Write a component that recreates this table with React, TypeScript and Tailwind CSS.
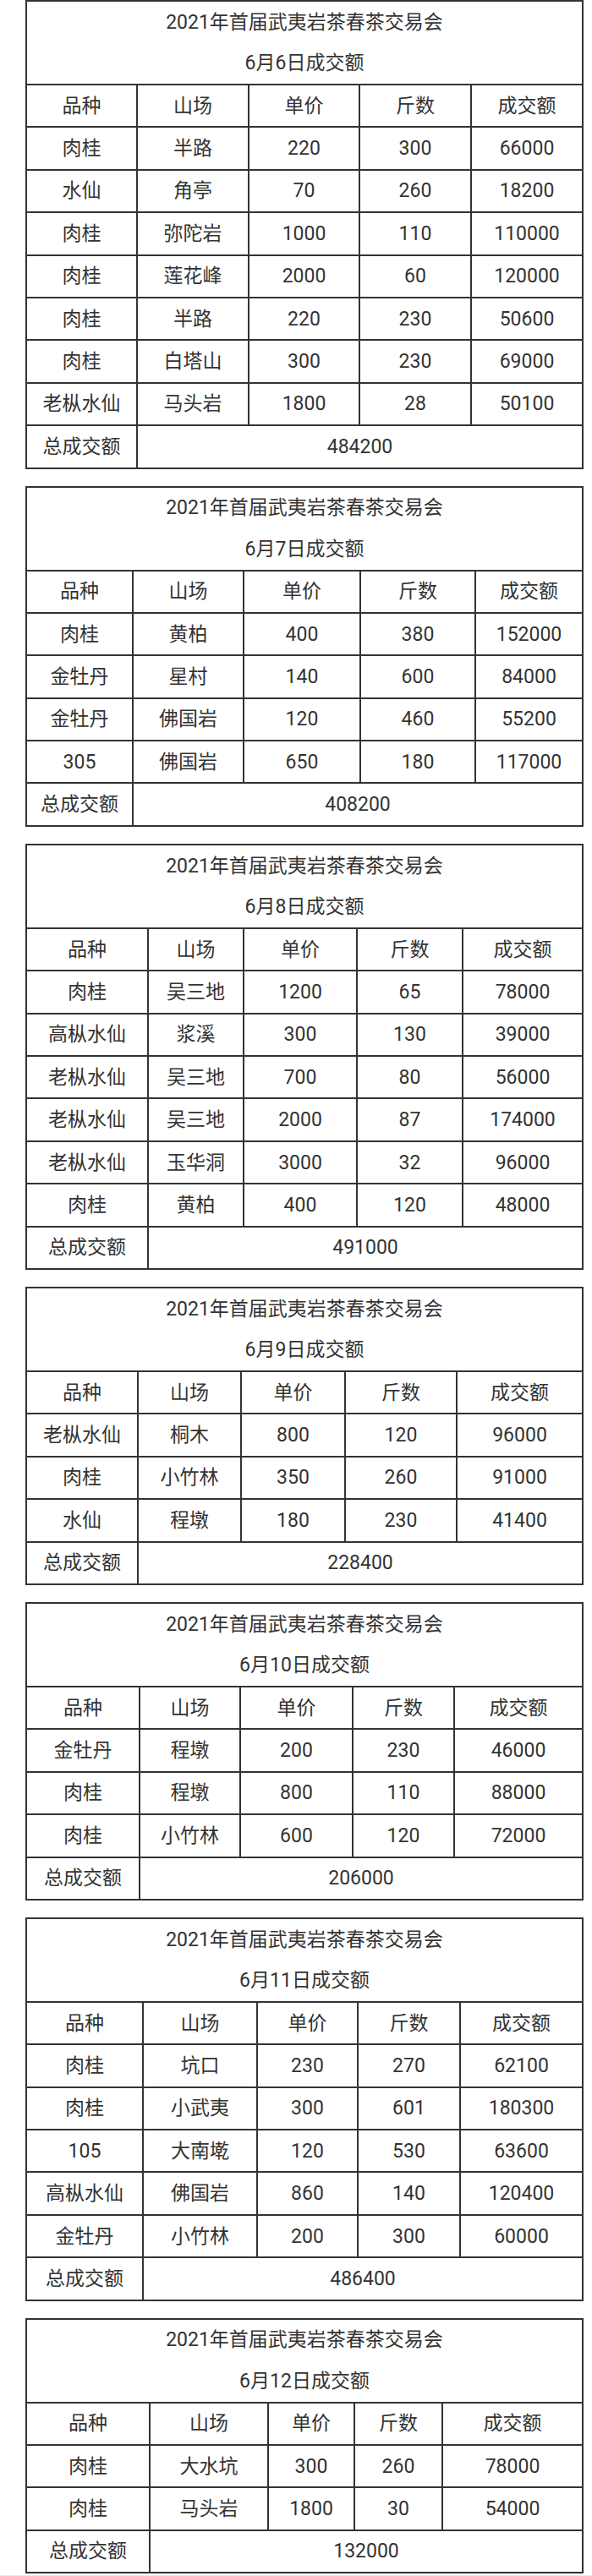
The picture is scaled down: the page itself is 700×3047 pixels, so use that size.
import React from "react";

type Row = [string, string, string, string, string];
type TableData = {
  date: string;
  cols: [string, string, string, string];
  rows: Row[];
  total: string;
};

const tables: TableData[] = [
  {
    date: "6月6日成交额",
    cols: ["w-[129px]", "w-[132px]", "w-[131px]", "w-[132px]"],
    rows: [
      ["肉桂", "半路", "220", "300", "66000"],
      ["水仙", "角亭", "70", "260", "18200"],
      ["肉桂", "弥陀岩", "1000", "110", "110000"],
      ["肉桂", "莲花峰", "2000", "60", "120000"],
      ["肉桂", "半路", "220", "230", "50600"],
      ["肉桂", "白塔山", "300", "230", "69000"],
      ["老枞水仙", "马头岩", "1800", "28", "50100"],
    ],
    total: "484200",
  },
  {
    date: "6月7日成交额",
    cols: ["w-[124px]", "w-[131px]", "w-[138px]", "w-[136px]"],
    rows: [
      ["肉桂", "黄柏", "400", "380", "152000"],
      ["金牡丹", "星村", "140", "600", "84000"],
      ["金牡丹", "佛国岩", "120", "460", "55200"],
      ["305", "佛国岩", "650", "180", "117000"],
    ],
    total: "408200",
  },
  {
    date: "6月8日成交额",
    cols: ["w-[142px]", "w-[113px]", "w-[134px]", "w-[125px]"],
    rows: [
      ["肉桂", "吴三地", "1200", "65", "78000"],
      ["高枞水仙", "浆溪", "300", "130", "39000"],
      ["老枞水仙", "吴三地", "700", "80", "56000"],
      ["老枞水仙", "吴三地", "2000", "87", "174000"],
      ["老枞水仙", "玉华洞", "3000", "32", "96000"],
      ["肉桂", "黄柏", "400", "120", "48000"],
    ],
    total: "491000",
  },
  {
    date: "6月9日成交额",
    cols: ["w-[130px]", "w-[122px]", "w-[123px]", "w-[132px]"],
    rows: [
      ["老枞水仙", "桐木", "800", "120", "96000"],
      ["肉桂", "小竹林", "350", "260", "91000"],
      ["水仙", "程墩", "180", "230", "41400"],
    ],
    total: "228400",
  },
  {
    date: "6月10日成交额",
    cols: ["w-[132px]", "w-[119px]", "w-[133px]", "w-[120px]"],
    rows: [
      ["金牡丹", "程墩", "200", "230", "46000"],
      ["肉桂", "程墩", "800", "110", "88000"],
      ["肉桂", "小竹林", "600", "120", "72000"],
    ],
    total: "206000",
  },
  {
    date: "6月11日成交额",
    cols: ["w-[136px]", "w-[135px]", "w-[119px]", "w-[121px]"],
    rows: [
      ["肉桂", "坑口", "230", "270", "62100"],
      ["肉桂", "小武夷", "300", "601", "180300"],
      ["105", "大南墘", "120", "530", "63600"],
      ["高枞水仙", "佛国岩", "860", "140", "120400"],
      ["金牡丹", "小竹林", "200", "300", "60000"],
    ],
    total: "486400",
  },
  {
    date: "6月12日成交额",
    cols: ["w-[144px]", "w-[140px]", "w-[102px]", "w-[104px]"],
    rows: [
      ["肉桂", "大水坑", "300", "260", "78000"],
      ["肉桂", "马头岩", "1800", "30", "54000"],
    ],
    total: "132000",
  },
];

const header: Row = ["品种", "山场", "单价", "斤数", "成交额"];

function DataRow({ cells, cols }: { cells: Row; cols: TableData["cols"] }) {
  return (
    <div className="flex h-[50.4px] border-t-2 border-[#333]">
      {cells.map((c, i) => (
        <div
          key={i}
          className={
            "flex items-center justify-center " +
            (i === 0 ? cols[0] : i < 4 ? cols[i] + " border-l-2 border-[#333]" : "flex-1 border-l-2 border-[#333]")
          }
        >
          {c}
        </div>
      ))}
    </div>
  );
}

function Table({ t }: { t: TableData }) {
  return (
    <div className="w-[660px] border-2 border-[#333]">
      <div className="h-[97px] flex flex-col justify-center items-center">
        <div className="h-[49px] flex items-center">2021年首届武夷岩茶春茶交易会</div>
        <div className="h-[49px] flex items-center">{t.date}</div>
      </div>
      <DataRow cells={header} cols={t.cols} />
      {t.rows.map((r, i) => (
        <DataRow key={i} cells={r} cols={t.cols} />
      ))}
      <div className="flex h-[50.4px] border-t-2 border-[#333]">
        <div className={"flex items-center justify-center " + t.cols[0]}>总成交额</div>
        <div className="flex-1 flex items-center justify-center border-l-2 border-[#333]">{t.total}</div>
      </div>
    </div>
  );
}

export default function App() {
  return (
    <div
      className="w-[700px] bg-white text-[23px] leading-none text-[#333]"
      style={{ fontFamily: 'Roboto, "Noto Sans CJK SC", sans-serif' }}
    >
      <div className="flex flex-col gap-[20px] pl-[30px] pr-[10px]">
        {tables.map((t, i) => (
          <Table key={i} t={t} />
        ))}
      </div>
      <div className="mt-[2px] h-[3px] bg-[#e9e9e9]" />
    </div>
  );
}
